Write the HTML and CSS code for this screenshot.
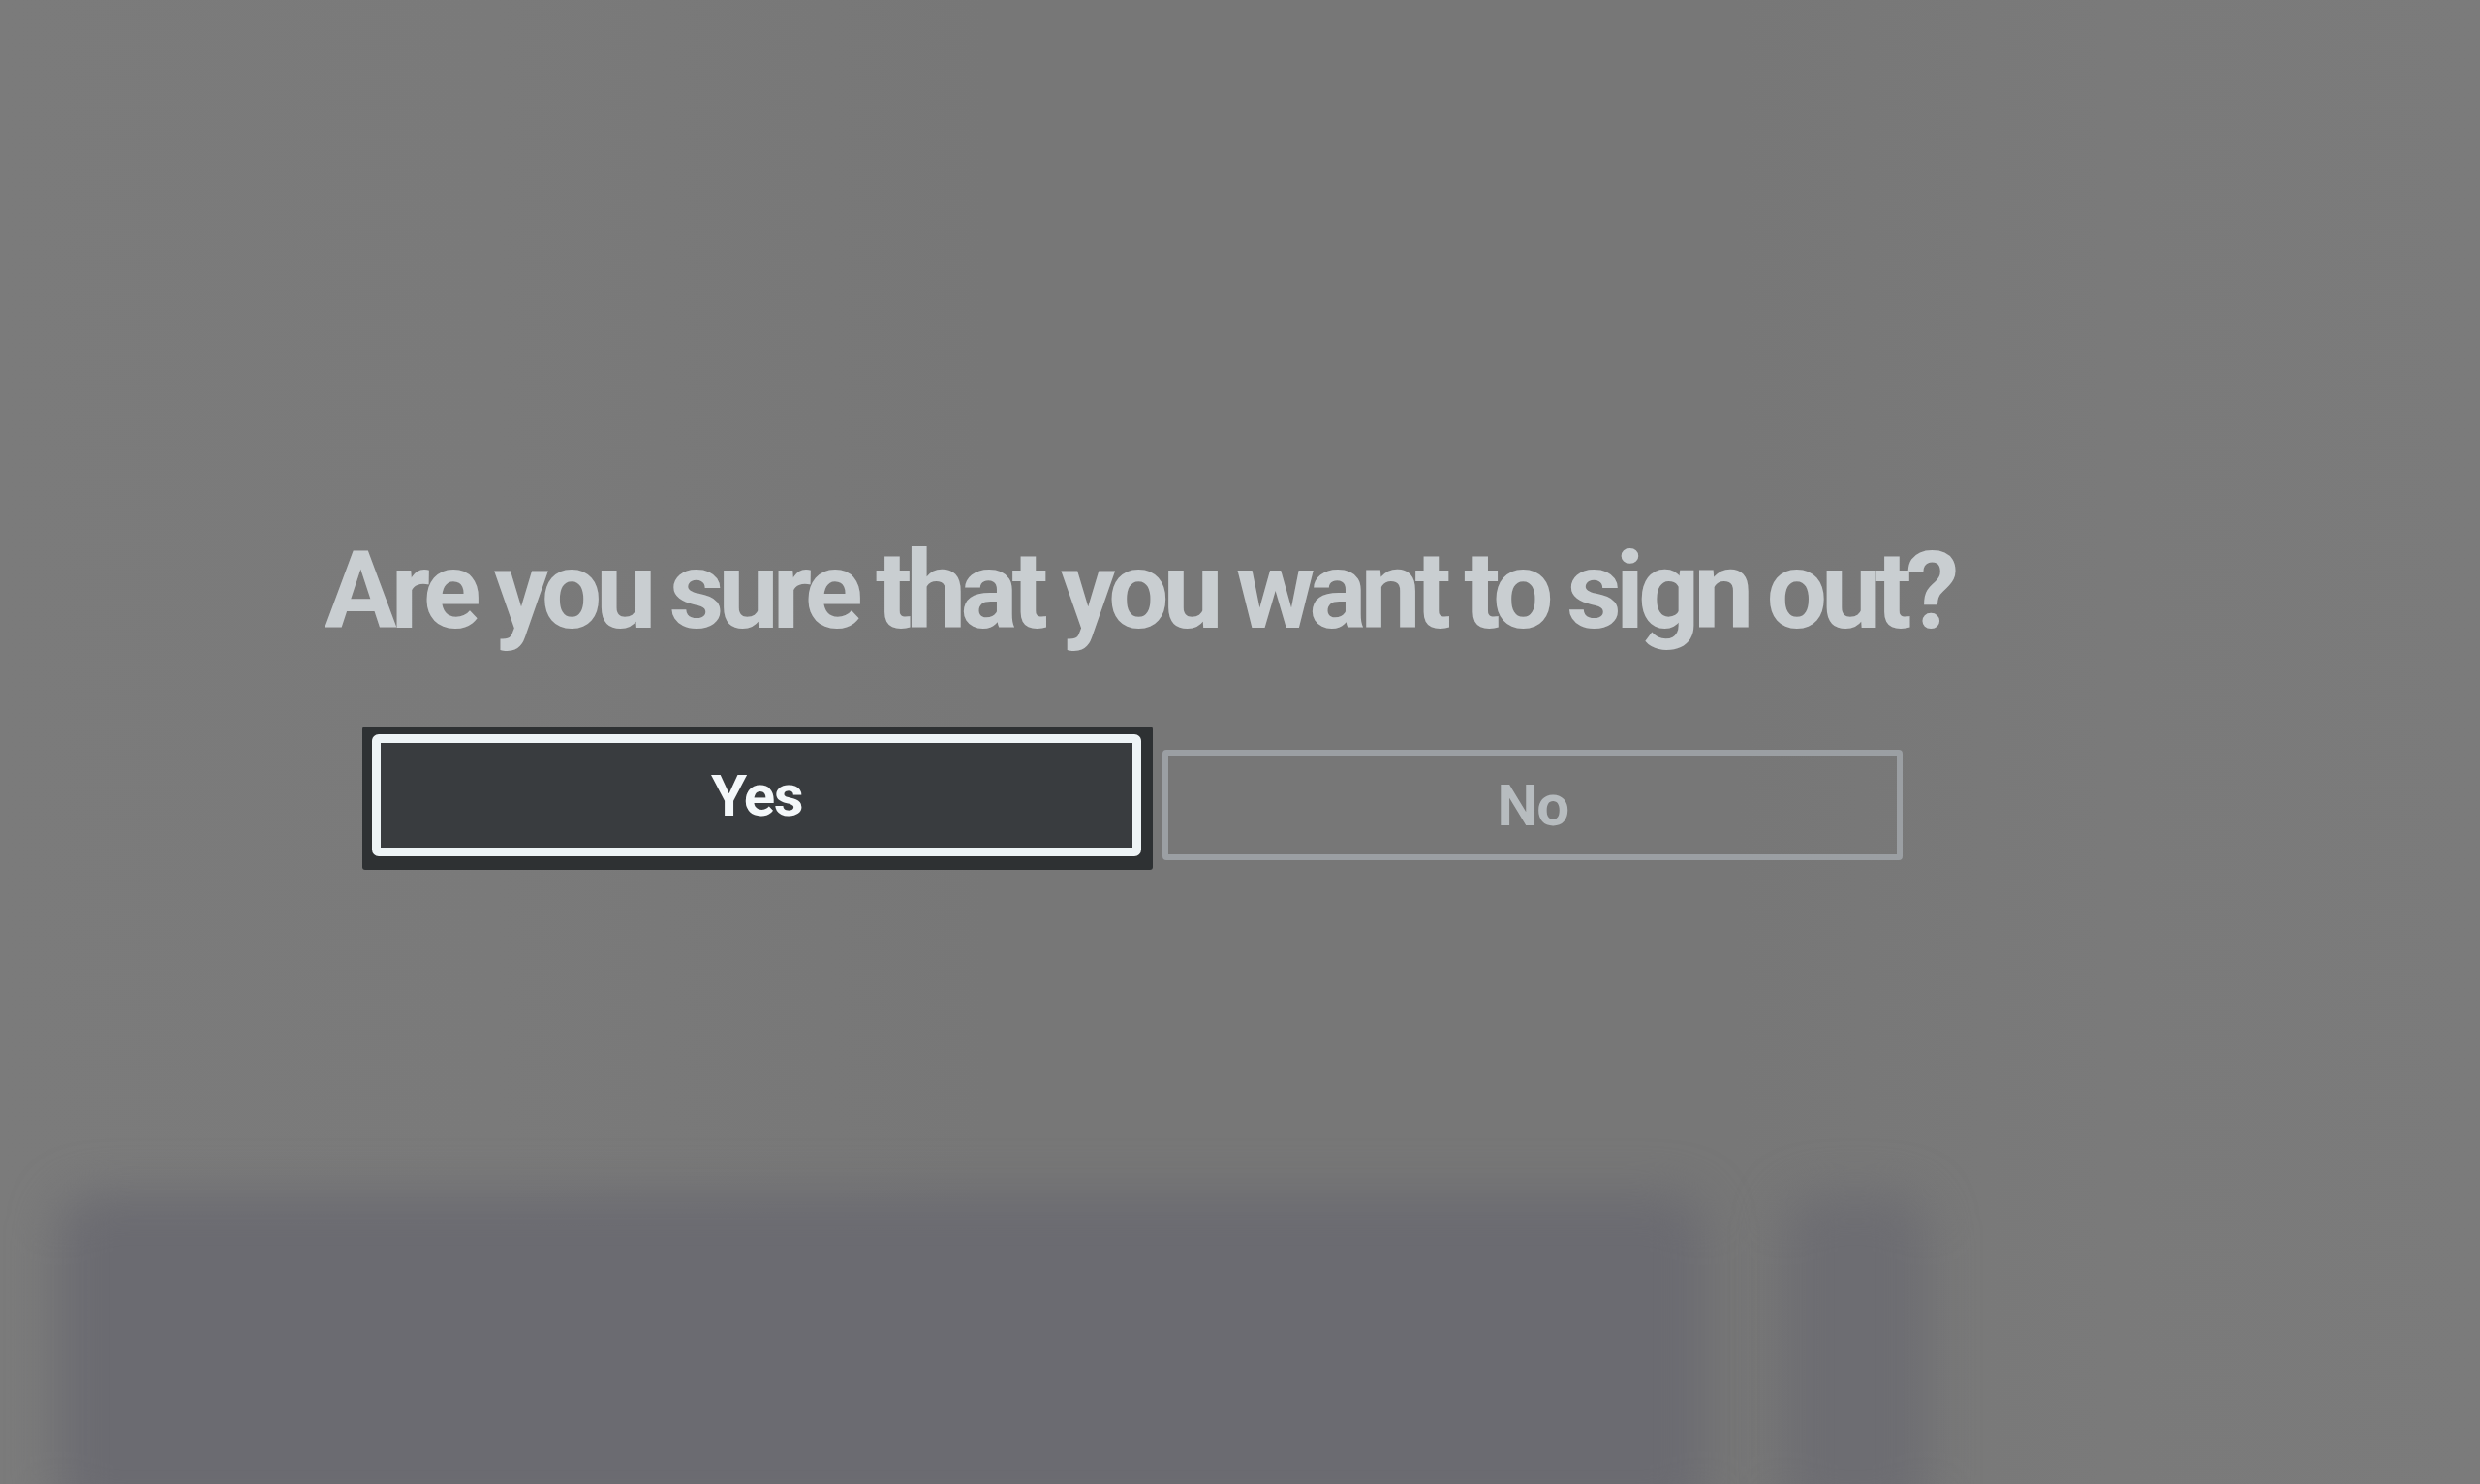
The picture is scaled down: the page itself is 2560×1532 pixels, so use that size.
FILE: index.html
```html
<!DOCTYPE html>
<html lang="en">
<head>
<meta charset="utf-8">
<title>Sign out</title>
<link rel="stylesheet" href="styles.css">
</head>
<body>
<div class="screen">
  <div class="dialog">
    <h1 class="question">Are you sure that you want to sign out?</h1>
    <div class="actions">
      <div class="focus-frame">
        <button class="btn btn-yes">Yes</button>
      </div>
      <button class="btn btn-no">No</button>
    </div>
  </div>
  <div class="backdrop-row">
    <div class="shade"></div>
    <div class="shade-gap"></div>
    <div class="shade shade-right"></div>
  </div>
</div>
</body>
</html>
```

FILE: styles.css
```css
html, body {
  margin: 0;
  padding: 0;
}
body {
  width: 2560px;
  height: 1532px;
  overflow: hidden;
  background: #797979;
  font-family: Roboto, "Liberation Sans", sans-serif;
}
.screen {
  width: 2560px;
  height: 1532px;
  display: flex;
  flex-direction: column;
  background:
    linear-gradient(90deg, #7b7b7b 0%, #7a7a7a 20%, #777777 40%, #777777 70%, #7a7a7a 85%, #7b7b7b 100%);
}
.dialog {
  padding-top: 540px;
  padding-left: 335px;
  width: 1680px;
  display: flex;
  flex-direction: column;
}
.question {
  margin: 0;
  font-family: Roboto, "Liberation Sans", sans-serif;
  font-size: 111px;
  line-height: 140px;
  font-weight: 700;
  letter-spacing: -6.2px;
  word-spacing: -2px;
  color: #c9ced1;
  white-space: nowrap;
}
.actions {
  display: flex;
  align-items: center;
  gap: 10px;
  margin-top: 70px;
  margin-left: 39px;
}
.focus-frame {
  background: #2e3133;
  padding: 8px 12px 14px 10px;
  border-radius: 3px;
}
.btn {
  font-family: Roboto, "Liberation Sans", sans-serif;
  font-weight: 700;
  font-size: 60px;
  letter-spacing: -1.5px;
  display: flex;
  align-items: center;
  justify-content: center;
  padding: 0;
  box-sizing: border-box;
  cursor: pointer;
}
.btn-yes {
  width: 794px;
  height: 126px;
  background: #393c3f;
  color: #f4f8fa;
  border: 9px solid #eef4f6;
  border-radius: 7px;
}
.btn-no {
  width: 764px;
  height: 114px;
  margin-top: 14px;
  background: transparent;
  color: #b7bcbf;
  border: 6px solid #9b9fa3;
  border-radius: 4px;
}
.backdrop-row {
  margin-top: auto;
  height: 300px;
  padding-left: 60px;
  display: flex;
}
.shade {
  width: 1700px;
  height: 340px;
  background: #6b6b71;
  border-radius: 40px;
  filter: blur(24px);
}
.shade-gap {
  width: 80px;
}
.shade-right {
  width: 150px;
  background: #6d6d72;
}
```
